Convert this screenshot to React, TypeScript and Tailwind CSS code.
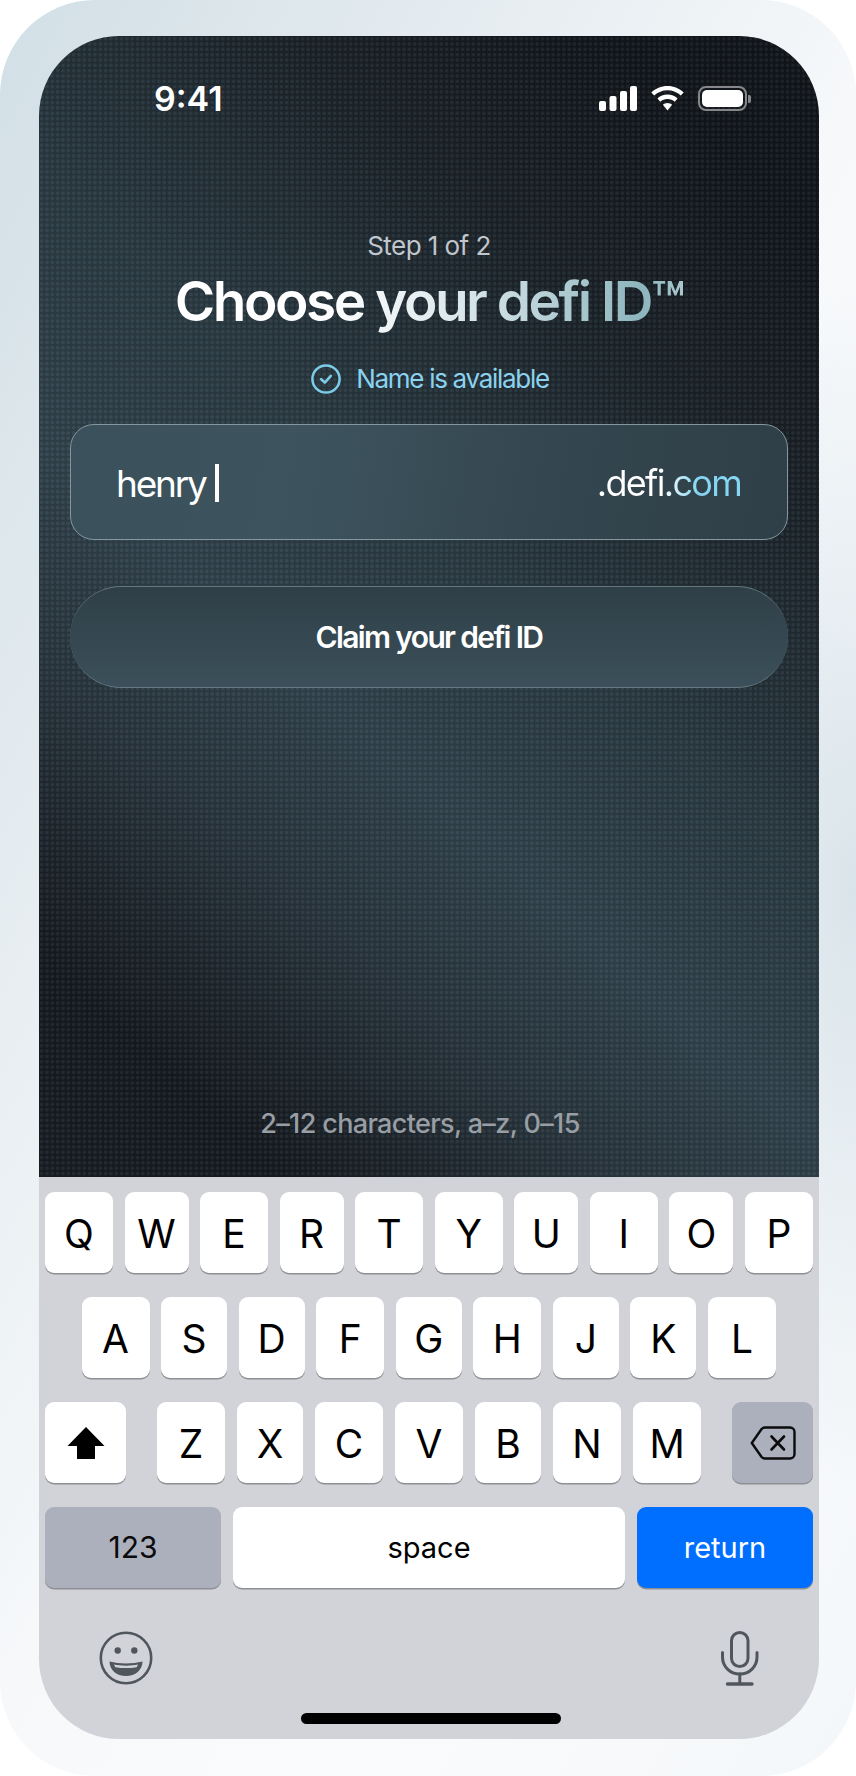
import React from "react";

const font = "[font-family:Inter,'Noto_Sans',sans-serif]";

const rowOne = [
  { label: "Q", width: "w-[68px]" },
  { label: "W", width: "w-[64px]" },
  { label: "E", width: "w-[68px]" },
  { label: "R", width: "w-[64px]" },
  { label: "T", width: "w-[68px]" },
  { label: "Y", width: "w-[68px]" },
  { label: "U", width: "w-[64px]" },
  { label: "I", width: "w-[68px]" },
  { label: "O", width: "w-[64px]" },
  { label: "P", width: "w-[68px]" },
];

const rowTwo = [
  { label: "A", width: "w-[68px]" },
  { label: "S", width: "w-[66px]" },
  { label: "D", width: "w-[66px]" },
  { label: "F", width: "w-[68px]" },
  { label: "G", width: "w-[66px]" },
  { label: "H", width: "w-[68px]" },
  { label: "J", width: "w-[66px]" },
  { label: "K", width: "w-[66px]" },
  { label: "L", width: "w-[68px]" },
];

const rowThree = [
  { label: "Z", width: "w-[68px]" },
  { label: "X", width: "w-[66px]" },
  { label: "C", width: "w-[68px]" },
  { label: "V", width: "w-[68px]" },
  { label: "B", width: "w-[66px]" },
  { label: "N", width: "w-[68px]" },
  { label: "M", width: "w-[68px]" },
];

function Key({ label, width }: { label: string; width: string }) {
  return (
    <div
      className={`${width} flex h-[81px] items-center justify-center rounded-[9px] bg-white pt-[1px] text-[39px] leading-none text-black shadow-[0_1.5px_0_#8f9094]`}>
      {label}
    </div>
  );
}

function StatusIcons() {
  return (
    <div className="flex items-center">
      {/* signal */}
      <svg width="38" height="25" viewBox="0 0 38 25" fill="white">
        <rect x="0" y="15" width="7" height="10" rx="2" />
        <rect x="10.5" y="10" width="7" height="15" rx="2" />
        <rect x="21" y="5" width="7" height="20" rx="2" />
        <rect x="31" y="0" width="7" height="25" rx="2" />
      </svg>
      {/* wifi */}
      <svg className="ml-[14px]" width="33" height="25" viewBox="0 0 33 25" fill="white">
        <path d="M16.5 0C10.2 0 4.6 2.5 0.3 6.5L3.2 9.6C6.7 6.3 11.4 4.3 16.5 4.3S26.3 6.3 29.8 9.6L32.7 6.5C28.4 2.5 22.8 0 16.5 0Z" />
        <path d="M16.5 8.6C12.6 8.6 9 10.1 6.4 12.6L9.3 15.7C11.2 13.9 13.7 12.9 16.5 12.9S21.8 13.9 23.7 15.7L26.6 12.6C24 10.1 20.4 8.6 16.5 8.6Z" />
        <path d="M16.5 17C14.8 17 13.1 17.7 11.9 18.8L16.5 24.5L21.1 18.8C19.9 17.7 18.2 17 16.5 17Z" />
      </svg>
      {/* battery */}
      <div className="ml-[14px] flex items-center">
        <div className="h-[25px] w-[49px] rounded-[8px] border-2 border-[#85878a] p-[2px]">
          <div className="h-full w-full rounded-[5px] bg-white" />
        </div>
        <div className="ml-[1px] h-[8px] w-[3px] rounded-r-[2px] bg-[#85878a]" />
      </div>
    </div>
  );
}

function CheckIcon() {
  return (
    <svg width="30" height="30" viewBox="0 0 30 30" fill="none" stroke="#7ccbe8">
      <circle cx="15" cy="15" r="13.6" strokeWidth="2.5" />
      <path d="M10.2 15.2L13.8 18.6L19.8 11.8" strokeWidth="2.6" strokeLinecap="round" strokeLinejoin="round" />
    </svg>
  );
}

function ShiftIcon() {
  return (
    <svg width="38" height="32" viewBox="0 0 38 32" fill="black">
      <path d="M19 0L37.5 19H28V32H10V19H0.5Z" />
    </svg>
  );
}

function DeleteIcon() {
  return (
    <svg width="46" height="34" viewBox="0 0 46 34" fill="none" stroke="#0b0b0d">
      <path
        d="M15 1.5H40C42.5 1.5 44.5 3.5 44.5 6V28C44.5 30.5 42.5 32.5 40 32.5H15C13.6 32.5 12.6 32 11.6 31L1.8 17L11.6 3C12.6 2 13.6 1.5 15 1.5Z"
        strokeWidth="2.4"
        strokeLinejoin="round"
      />
      <path d="M21.5 10.5L34 23.5M34 10.5L21.5 23.5" strokeWidth="2.6" strokeLinecap="round" />
    </svg>
  );
}

function EmojiIcon() {
  return (
    <svg width="54" height="54" viewBox="0 0 54 54">
      <circle cx="27" cy="27" r="25.2" fill="none" stroke="#50565c" strokeWidth="2.6" />
      <circle cx="18.7" cy="19.5" r="3.2" fill="#50565c" />
      <circle cx="35.3" cy="19.5" r="3.2" fill="#50565c" />
      <path d="M10.5 30.5C20.5 33 33.5 33 43.5 30.5C43.5 39 36.5 45 27 45C17.5 45 10.5 39 10.5 30.5Z" fill="#50565c" />
      <path d="M15 33.5C22 35 32 35 39 33.5C38.6 34.6 38.2 35.4 37.6 36.2C30.5 37.4 23.5 37.4 16.4 36.2C15.8 35.4 15.4 34.6 15 33.5Z" fill="#d1d3d9" />
    </svg>
  );
}

function MicIcon() {
  return (
    <svg width="38" height="55" viewBox="0 0 38 55" fill="none" stroke="#50565c" strokeWidth="3" strokeLinecap="round">
      <rect x="10.5" y="1.5" width="16.5" height="34" rx="8.25" />
      <path d="M1.5 21.5V26C1.5 35.5 9 43 18.8 43C28.5 43 36 35.5 36 26V21.5" />
      <path d="M18.8 43V52.5" />
      <path d="M6.5 53H31" strokeWidth="3.4" />
    </svg>
  );
}

export default function App() {
  return (
    <div
      className={`${font} h-[1776px] w-[856px] rounded-[95px] bg-[radial-gradient(ellipse_260px_600px_at_100%_50%,#d9e4ea_0%,transparent_100%),linear-gradient(118deg,#d2dfe6_0%,#e6edf1_28%,#f6f8fa_50%,#fafbfd_70%,#f4f7f9_100%)] pl-[39px] pr-[37px] pt-[36px]`}>
      <div className="flex h-[1703px] flex-col overflow-hidden rounded-[80px]">
        {/* Upper screen */}
        <div className="flex h-[1141px] flex-col bg-[radial-gradient(circle,rgba(125,150,165,0.105)_1.5px,rgba(0,0,0,0.09)_2.2px),linear-gradient(222deg,#12151a_10%,#1b2228_25%,#2b3a42_45%,#32434d_60%,#2a363e_72%,#161a1f_88%,#181e23_100%)] bg-size-[5.33px_5.33px,100%_100%] px-[31px]">
          {/* Status bar */}
          <div className="flex items-center justify-between pl-[84px] pr-[37px] pt-[50px]">
            <span className="text-[34px] leading-[25px] font-semibold text-white">9:41</span>
            <StatusIcons />
          </div>

          <p className="mt-[119px] text-center text-[26px] leading-[32px] tracking-[-0.55px] text-[#c0c6cc]">
            Step 1 of 2
          </p>
          <h1 className="mx-auto mt-[7px] bg-[linear-gradient(90deg,#ffffff_30%,#d7e5ea_58%,#8db5bd_92%,#a9c7cd_100%)] bg-clip-text text-[55px] leading-[64px] font-semibold tracking-[-2.5px] text-transparent">
            Choose your defi ID™
          </h1>

          <div className="mt-[30px] flex items-center justify-center gap-[15px] pl-[2px]">
            <CheckIcon />
            <span className="text-[26px] leading-[32px] tracking-[-1.3px] text-[#8ad2ee]">Name is available</span>
          </div>

          {/* Name input */}
          <div className="mt-[29px] flex h-[116px] items-center justify-between rounded-[24px] border border-[#84979e] bg-[linear-gradient(100deg,#3a505a_0%,#3d545e_30%,#33454e_70%,#2f3f47_100%)] pl-[45px] pr-[46px] pt-[2px]">
            <div className="flex items-center">
              <span className="text-[37px] leading-none tracking-[-2.2px] text-white">henry</span>
              <div className="ml-[9px] h-[38px] w-[4px] bg-white" />
            </div>
            <span className="bg-[linear-gradient(90deg,#ffffff_45%,#85d5f2_70%)] bg-clip-text text-[36px] leading-none tracking-[-1.7px] text-transparent">
              .defi.com
            </span>
          </div>

          {/* Claim button */}
          <button className="mt-[46px] h-[102px] w-full rounded-[51px] border-t border-b border-[#66787f] bg-[linear-gradient(180deg,#2f3f47_0%,#3b505a_100%)] text-[30px] font-semibold tracking-[-1.65px] text-white">
            Claim your defi ID
          </button>

          <p className="mt-auto mb-[37px] pr-[18px] text-center text-[27px] leading-[32px] font-medium tracking-[-0.65px] text-[#989ea3]">
            2–12 characters, a–z, 0–15
          </p>
        </div>

        {/* Keyboard */}
        <div className="flex flex-1 flex-col bg-[#d1d3d9] px-[6px] pt-[15px]">
          <div className="flex justify-between">
            {rowOne.map((key) => (
              <Key key={key.label} label={key.label} width={key.width} />
            ))}
          </div>
          <div className="mt-[24px] flex justify-between pl-[36.5px] pr-[37px]">
            {rowTwo.map((key) => (
              <Key key={key.label} label={key.label} width={key.width} />
            ))}
          </div>
          <div className="mt-[24px] flex items-center justify-between">
            <div className="flex h-[81px] w-[81px] items-center justify-center rounded-[9px] bg-white shadow-[0_1.5px_0_#8f9094]">
              <ShiftIcon />
            </div>
            <div className="flex w-[544px] justify-between">
              {rowThree.map((key) => (
                <Key key={key.label} label={key.label} width={key.width} />
              ))}
            </div>
            <div className="flex h-[81px] w-[81px] items-center justify-center rounded-[9px] bg-[#abb0bc] shadow-[0_1.5px_0_#8f9094]">
              <DeleteIcon />
            </div>
          </div>
          <div className="mt-[24px] flex gap-[12px]">
            <div className="flex h-[81px] w-[176px] items-center justify-center rounded-[9px] bg-[#abb0bc] text-[30px] text-[#0b0b0d] shadow-[0_1.5px_0_#8f9094]">
              123
            </div>
            <div className="flex h-[81px] flex-1 items-center justify-center rounded-[9px] bg-white text-[29px] text-black shadow-[0_1.5px_0_#8f9094]">
              space
            </div>
            <div className="flex h-[81px] w-[176px] items-center justify-center rounded-[9px] bg-[#006fff] text-[29px] text-white shadow-[0_1.5px_0_#8f9094]">
              return
            </div>
          </div>

          <div className="mt-[43px] flex items-start justify-between pl-[54px] pr-[54px]">
            <EmojiIcon />
            <MicIcon />
          </div>

          <div className="mt-[27px] ml-[256px] h-[11px] w-[260px] rounded-full bg-black" />
        </div>
      </div>
    </div>
  );
}
